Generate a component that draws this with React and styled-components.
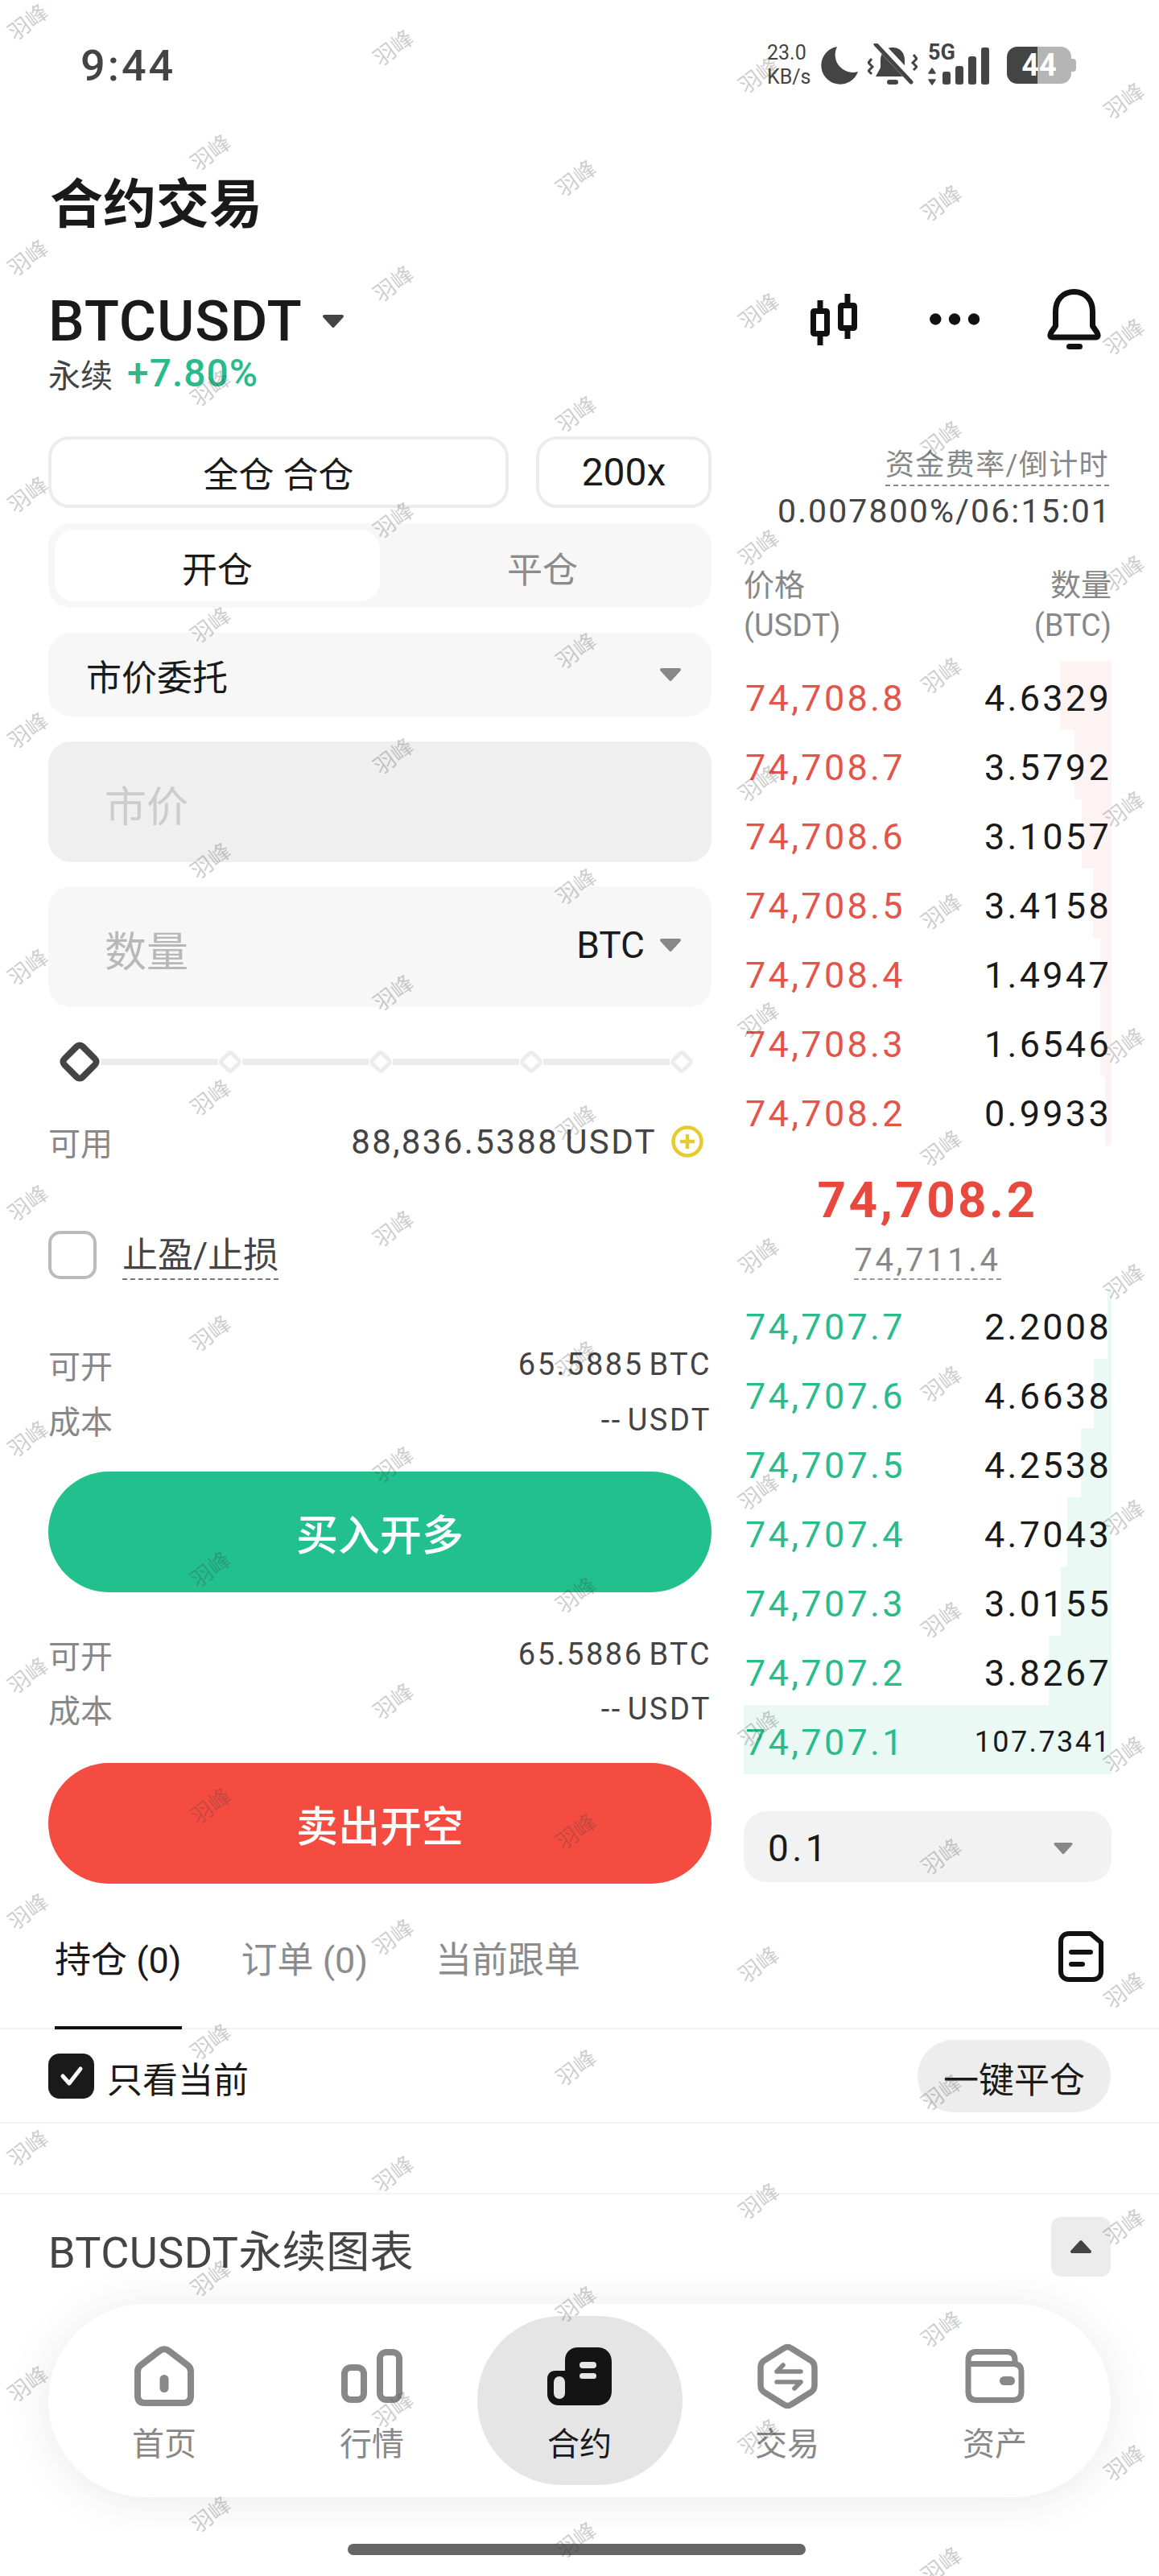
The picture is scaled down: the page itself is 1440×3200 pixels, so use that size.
import React from "react";
import styled, { createGlobalStyle } from "styled-components";

const GlobalStyle = createGlobalStyle`
    html, body {
        margin: 0;
        padding: 0;
        background: #fff;
    }
    * {
        box-sizing: border-box;
    }
`;

const Page = styled.div`
    position: relative;
    width: 1440px;
    height: 3200px;
    overflow: hidden;
    background: #fff;
    color: #1a1a1a;
    font-family: Roboto, "Noto Sans CJK SC", sans-serif;
`;

/* status bar */
const StatusBar = styled.div`
    height: 160px;
    display: flex;
    align-items: center;
    justify-content: space-between;
    padding: 2px 109px 0 100px;
`;
const Clock = styled.div`
    font-size: 54px;
    font-weight: 500;
    letter-spacing: 3px;
    color: #444;
`;
const StatusIcons = styled.div`
    display: flex;
    align-items: center;
`;
const Speed = styled.div`
    width: 66px;
    font-size: 25px;
    line-height: 30px;
    color: #444;
    text-align: left;
`;
const SignalBox = styled.div`
    position: relative;
    width: 78px;
    height: 52px;
    margin: 0 20px 0 13px;
`;
const FiveG = styled.span`
    position: absolute;
    left: 0;
    top: -6px;
    font-size: 27px;
    font-weight: 700;
    color: #444;
`;
const Battery = styled.div`
    position: relative;
    width: 80px;
    height: 46px;
    border-radius: 13px;
    background: linear-gradient(90deg, #444 0, #444 38px, #b5b5b5 38px);
    display: flex;
    align-items: center;
    justify-content: center;
    font-size: 38px;
    font-weight: 700;
    color: #fff;
    &::after {
        content: "";
        position: absolute;
        right: -6px;
        top: 15px;
        width: 6px;
        height: 16px;
        border-radius: 0 4px 4px 0;
        background: #b5b5b5;
    }
`;

/* heading */
const Title = styled.h1`
    margin: 0;
    height: 176px;
    padding-left: 62px;
    display: flex;
    align-items: center;
    font-size: 66px;
    font-weight: 700;
    color: #1a1a1a;
`;
const TickerRow = styled.div`
    height: 109px;
    padding: 16px 72px 0 60px;
    display: flex;
    align-items: center;
    justify-content: space-between;
`;
const Ticker = styled.div`
    display: flex;
    align-items: center;
    gap: 24px;
    font-size: 71px;
    font-weight: 500;
    letter-spacing: 0.8px;
    color: #1a1a1a;
`;
const TickerTools = styled.div`
    display: flex;
    align-items: center;
    gap: 84px;
    margin-top: -4px;
`;
const CandleSlot = styled.div`
    display: flex;
    margin-right: 6px;
`;
const SubRow = styled.div`
    height: 97px;
    padding: 0 0 60px 60px;
    display: flex;
    align-items: center;
    gap: 18px;
    font-size: 40px;
    color: #444;
`;
const Change = styled.span`
    font-size: 48px;
    font-weight: 500;
    letter-spacing: 1px;
    color: #2abb8c;
`;

/* two columns */
const Columns = styled.div`
    display: flex;
    gap: 40px;
    padding-left: 60px;
`;
const OrderForm = styled.div`
    width: 824px;
    display: flex;
    flex-direction: column;
`;
const Book = styled.div`
    width: 457px;
    display: flex;
    flex-direction: column;
`;

const MarginRow = styled.div`
    display: flex;
    gap: 34px;
`;
const OutlineButton = styled.div`
    height: 89px;
    width: ${({ $w }) => $w}px;
    border: 4px solid #ececec;
    border-radius: 26px;
    display: flex;
    align-items: center;
    justify-content: center;
    font-size: ${({ $size }) => $size || 44}px;
    color: #1a1a1a;
`;
const Segmented = styled.div`
    margin-top: 19px;
    height: 105px;
    padding: 8px;
    border-radius: 28px;
    background: #f7f7f7;
    display: flex;
`;
const Segment = styled.div`
    width: 404px;
    padding-top: 4px;
    border-radius: 24px;
    background: ${({ $active }) => ($active ? "#fff" : "transparent")};
    color: ${({ $active }) => ($active ? "#1a1a1a" : "#8c8c8c")};
    display: flex;
    align-items: center;
    justify-content: center;
    font-size: 44px;
`;
const Field = styled.div`
    margin-top: ${({ $mt }) => $mt}px;
    height: ${({ $h }) => $h}px;
    padding: ${({ $pad }) => `0 37px 0 ${$pad}px`};
    border-radius: 28px;
    background: ${({ $bg }) => $bg};
    display: flex;
    align-items: center;
    justify-content: space-between;
    font-size: 44px;
    color: #1a1a1a;
`;
const FieldText = styled.span`
    margin-top: 2px;
    margin-left: -2px;
`;
const Placeholder = styled.span`
    margin-top: 4px;
    margin-left: -2px;
    font-size: 52px;
    color: ${({ $color }) => $color};
`;
const Unit = styled.div`
    display: flex;
    align-items: center;
    gap: 18px;
    margin-top: -4px;
    font-size: 46px;
`;

const Slider = styled.div`
    margin: 41px 0 0 12px;
    height: 54px;
    width: 790px;
    display: flex;
    align-items: center;
`;
const SliderLine = styled.div`
    flex: ${({ $w }) => ($w ? `0 0 ${$w}px` : 1)};
    height: 8px;
    background: #ececec;
`;

const Row = styled.div`
    margin-top: ${({ $mt }) => $mt}px;
    height: ${({ $h }) => $h}px;
    display: flex;
    align-items: center;
    justify-content: space-between;
    font-size: 40px;
    color: #888;
`;
const Amount = styled.span`
    color: #444;
    font-size: ${({ $size }) => $size || 38}px;
    letter-spacing: ${({ $ls }) => $ls || 2.5}px;
    word-spacing: -5px;
`;
const AvailableValue = styled.div`
    display: flex;
    align-items: center;
    gap: 18px;
    padding-right: 10px;
`;
const StopRow = styled.div`
    margin-top: 84px;
    display: flex;
    align-items: center;
    gap: 32px;
`;
const EmptyBox = styled.div`
    width: 60px;
    height: 60px;
    border: 4px solid #bbb;
    border-radius: 15px;
`;
const DashedLabel = styled.span`
    font-size: ${({ $size }) => $size}px;
    color: ${({ $color }) => $color};
    line-height: ${({ $lh }) => $lh}px;
    letter-spacing: ${({ $ls }) => $ls || 0}px;
    margin-top: ${({ $mt }) => $mt || 0}px;
    border-bottom: 2px dashed ${({ $dash }) => $dash || "#777"};
`;
const TradeButton = styled.div`
    margin-top: ${({ $mt }) => $mt}px;
    height: 150px;
    border-radius: 75px;
    background: ${({ $bg }) => $bg};
    color: #fff;
    display: flex;
    align-items: center;
    justify-content: center;
    font-size: 52px;
    font-weight: 500;
`;

/* order book */
const Funding = styled.div`
    height: 132px;
    padding-right: 3px;
    display: flex;
    flex-direction: column;
    align-items: flex-end;
    padding-top: 12px;
`;
const FundingValue = styled.div`
    margin: 6px -3px 0 0;
    font-size: 41px;
    line-height: 50px;
    letter-spacing: 2.1px;
    color: #444;
`;
const BookHead = styled.div`
    height: 150px;
    padding-top: 28px;
    display: flex;
    justify-content: space-between;
    font-size: 38px;
    line-height: 50px;
    color: #888;
`;
const HeadRight = styled.div`
    text-align: right;
`;
const BookRow = styled.div`
    position: relative;
    height: 86px;
    padding: 0 0 0 2px;
    display: flex;
    align-items: center;
    justify-content: space-between;
    font-size: 45px;
    letter-spacing: 3.3px;
`;
const DepthBar = styled.div`
    position: absolute;
    top: -3px;
    right: 0;
    bottom: 3px;
    background: ${({ $bg }) => $bg};
`;
const Price = styled.span`
    position: relative;
    color: ${({ $color }) => $color};
`;
const Size = styled.span`
    position: relative;
    color: #1a1a1a;
    font-size: ${({ $small }) => ($small ? "36px" : "inherit")};
    letter-spacing: ${({ $small }) => ($small ? "2.4px" : "inherit")};
`;
const MidPrice = styled.div`
    height: 179px;
    display: flex;
    flex-direction: column;
    align-items: center;
    padding-top: 29px;
`;
const LastPrice = styled.div`
    font-size: 62px;
    line-height: 72px;
    font-weight: 700;
    letter-spacing: 3.4px;
    color: #e8493f;
`;
const DepthSelect = styled.div`
    margin-top: 43px;
    height: 88px;
    padding: 4px 44px 0 30px;
    border-radius: 28px;
    background: #f2f2f2;
    display: flex;
    align-items: center;
    justify-content: space-between;
    font-size: 46px;
    letter-spacing: 4.4px;
`;

/* positions */
const TabsBar = styled.div`
    height: 181px;
    padding: 0 68px 0 68px;
    border-bottom: 2px solid #f2f2f2;
    display: flex;
    justify-content: space-between;
`;
const Tabs = styled.div`
    display: flex;
`;
const Tab = styled.div`
    margin-right: ${({ $mr }) => $mr || 0}px;
    padding-top: 70px;
    height: 181px;
    font-size: 45px;
    line-height: 52px;
    color: ${({ $active }) => ($active ? "#1a1a1a" : "#8c8c8c")};
    border-bottom: 4px solid ${({ $active }) => ($active ? "#111" : "transparent")};
`;
const NoteSlot = styled.div`
    padding-top: 59px;
    margin-right: 1px;
`;
const FilterRow = styled.div`
    height: 117px;
    padding: 0 60px;
    border-bottom: 2px solid #f2f2f2;
    display: flex;
    align-items: center;
    justify-content: space-between;
`;
const CheckLabel = styled.div`
    display: flex;
    align-items: center;
    gap: 16px;
    font-size: 44px;
    color: #1a1a1a;
`;
const LabelText = styled.span`
    margin-top: 4px;
`;
const CheckedBox = styled.div`
    width: 57px;
    height: 56px;
    border-radius: 14px;
    background: #1a1a1a;
    display: flex;
    align-items: center;
    justify-content: center;
`;
const PillButton = styled.div`
    width: 240px;
    height: 90px;
    padding-top: 5px;
    border-radius: 45px;
    background: #ededed;
    display: flex;
    align-items: center;
    justify-content: center;
    font-size: 44px;
    color: #1a1a1a;
`;
const Spacer = styled.div`
    height: 88px;
    border-bottom: 2px solid #f4f4f4;
`;
const ChartHead = styled.div`
    height: 104px;
    padding: 28px 60px 0 60px;
    display: flex;
    align-items: flex-start;
    justify-content: space-between;
    font-size: 54px;
    letter-spacing: 0.4px;
    color: #444;
`;
const ChartTitle = styled.span`
    margin-top: 17px;
    line-height: 56px;
`;
const CollapseButton = styled.div`
    width: 74px;
    height: 74px;
    border-radius: 12px;
    background: #ececec;
    display: flex;
    align-items: center;
    justify-content: center;
`;

/* bottom nav */
const NavWrap = styled.div`
    height: 310px;
    padding: 32px 60px 38px;
    overflow: hidden;
`;
const Nav = styled.nav`
    height: 240px;
    border-radius: 120px;
    background: #fff;
    box-shadow: 0 4px 60px rgba(0, 0, 0, 0.09);
    display: flex;
    justify-content: center;
    align-items: center;
`;
const NavItem = styled.div`
    width: 258px;
    height: 210px;
    display: flex;
    flex-direction: column;
    align-items: center;
    font-size: 40px;
    color: ${({ $active }) => ($active ? "#1a1a1a" : "#888")};
`;
const NavBubble = styled.div`
    width: 255px;
    height: 210px;
    border-radius: 105px / 105px;
    background: ${({ $active }) => ($active ? "#e5e5e5" : "transparent")};
    display: flex;
    flex-direction: column;
    align-items: center;
`;
const NavIcon = styled.div`
    height: 83px;
    margin-top: 33px;
    display: flex;
    align-items: center;
    justify-content: center;
`;
const NavLabel = styled.span`
    margin-top: 19px;
    line-height: 50px;
`;
const HomeBar = styled.div`
    width: 569px;
    height: 14px;
    margin: 20px 0 0 432px;
    border-radius: 7px;
    background: #666;
`;

/* watermark layer */
const WatermarkLayer = styled.div`
    position: absolute;
    inset: 0;
    pointer-events: none;
`;
const Watermark = styled.span`
    position: absolute;
    font-size: 27px;
    line-height: 32px;
    white-space: nowrap;
    color: rgba(60, 60, 60, 0.27);
    transform: translate(-50%, -50%) rotate(-37deg);
`;

const Caret = ({ w, h, color }) => (
    <svg width={w} height={h} viewBox="0 0 28 18">
        <path d="M3 3 H25 L14 15 Z" fill={color} stroke={color} strokeWidth="4" strokeLinejoin="round" />
    </svg>
);

const Moon = () => (
    <svg width="47" height="47" viewBox="0 0 47 47">
        <path d="M21 0 A23.5 23.5 0 1 0 47 31 A22 22 0 0 1 21 0 Z" fill="#444" />
    </svg>
);

const MutedBell = () => (
    <svg width="62" height="54" viewBox="0 0 62 54" style={{ margin: "0 0 0 12px" }}>
        <path d="M31 5 C21 5 16 12 16 21 V30 L10 41 H52 L46 30 V21 C46 12 41 5 31 5 Z" fill="#444" />
        <rect x="24" y="45" width="14" height="6" rx="3" fill="#444" />
        <path d="M5 19 L1 24 L6 29 L1 34 L5 38 M57 14 L61 19 L56 24 L61 29 L57 33" fill="none" stroke="#444" strokeWidth="3" />
        <path d="M11 -2 L57 47" stroke="#fff" strokeWidth="11" />
        <path d="M10 1 L54 48" stroke="#444" strokeWidth="5" strokeLinecap="round" />
    </svg>
);

const SignalBars = () => (
    <svg width="78" height="52" viewBox="0 0 78 52" style={{ display: "block" }}>
        <path d="M5 30 L9 36 H1 Z M5 50 L9 44 H1 Z" fill="#444" stroke="#444" strokeWidth="1.5" strokeLinejoin="round" />
        <rect x="18" y="34" width="10" height="16" rx="3" fill="#444" />
        <rect x="34" y="27" width="10" height="23" rx="3" fill="#444" />
        <rect x="50" y="15" width="10" height="35" rx="3" fill="#444" />
        <rect x="66" y="4" width="10" height="46" rx="3" fill="#444" />
    </svg>
);

const CandleIcon = () => (
    <svg width="58" height="64" viewBox="0 0 58 64" style={{ display: "block" }}>
        <path d="M12 8 V21 M12 50 V64 M46 0 V14 M46 43 V56" stroke="#111" strokeWidth="7" />
        <rect x="3.5" y="21.5" width="17" height="28" rx="1" fill="none" stroke="#111" strokeWidth="7" />
        <rect x="37.5" y="14.5" width="17" height="28" rx="1" fill="none" stroke="#111" strokeWidth="7" />
    </svg>
);

const Dots = () => (
    <svg width="62" height="15" viewBox="0 0 62 15">
        <circle cx="7.3" cy="7.5" r="7.2" fill="#111" />
        <circle cx="31" cy="7.5" r="7.2" fill="#111" />
        <circle cx="55" cy="7.5" r="7.2" fill="#111" />
    </svg>
);

const BellIcon = () => (
    <svg width="67" height="75" viewBox="0 0 67 75">
        <path
            d="M10.5 28 C10.5 13 20 3.5 33.5 3.5 C47 3.5 56.5 13 56.5 28 V46 L62 54 Q65 60 60 60 H7 Q2 60 5 54 L10.5 46 Z"
            fill="none"
            stroke="#111"
            strokeWidth="7"
            strokeLinejoin="round"
        />
        <rect x="24" y="68" width="20" height="7" rx="3.5" fill="#111" />
    </svg>
);

const Diamond = ({ size, stroke, width }) => (
    <svg width={size} height={size} viewBox="0 0 54 54" style={{ flex: "none", overflow: "visible" }}>
        <rect x="11" y="11" width="32" height="32" rx="5" transform="rotate(45 27 27)" fill="#fff" stroke={stroke} strokeWidth={width} />
    </svg>
);

const PlusCircle = () => (
    <svg width="40" height="42" viewBox="0 0 40 42">
        <circle cx="20" cy="21" r="17.5" fill="none" stroke="#e6cb30" strokeWidth="4.5" />
        <path d="M20 12 V30 M11 21 H29" stroke="#e6cb30" strokeWidth="4.5" />
    </svg>
);

const NoteIcon = () => (
    <svg width="56" height="63" viewBox="0 0 56 63" style={{ display: "block" }}>
        <path d="M13 3 H40 L53 14 V50 C53 56 49 60 43 60 H13 C7 60 3 56 3 50 V13 C3 7 7 3 13 3 Z" fill="none" stroke="#111" strokeWidth="6" strokeLinejoin="round" />
        <path d="M16 26 H40 M16 41 H30" stroke="#111" strokeWidth="6" strokeLinecap="round" />
    </svg>
);

const Tick = () => (
    <svg width="30" height="26" viewBox="0 0 30 26">
        <path d="M4 13 L12 22 L26 4" fill="none" stroke="#fff" strokeWidth="5" strokeLinecap="round" strokeLinejoin="round" />
    </svg>
);

const HomeIcon = () => (
    <svg width="74" height="75" viewBox="0 0 74 75">
        <path
            d="M31 6.5 Q37 2 43 6.5 L66 24 Q70 27 70 32 V62 Q70 71 61 71 H13 Q4 71 4 62 V32 Q4 27 8 24 Z"
            fill="none"
            stroke="#888"
            strokeWidth="8"
            strokeLinejoin="round"
        />
        <rect x="31.5" y="36" width="11" height="22" rx="5.5" fill="#888" />
    </svg>
);

const MarketIcon = () => (
    <svg width="76" height="67" viewBox="0 0 76 67">
        <rect x="4" y="23" width="24" height="40" rx="8" fill="none" stroke="#888" strokeWidth="8" />
        <rect x="48" y="4" width="24" height="59" rx="8" fill="none" stroke="#888" strokeWidth="8" />
    </svg>
);

const ContractIcon = () => (
    <svg width="80" height="72" viewBox="0 0 80 72">
        <path
            d="M22 16 C22 6 29 0 38 0 H62 C73 0 80 7 80 18 V54 C80 65 73 72 62 72 H14 C6 72 0 66 0 58 V39 C0 33 4 29 10 29 H22 Z"
            fill="#141414"
        />
        <rect x="40" y="18" width="21" height="8" rx="4" fill="#e5e5e5" />
        <rect x="40" y="32" width="21" height="7" rx="3.5" fill="#e5e5e5" />
        <rect x="8" y="36" width="14" height="28" rx="7" fill="#e5e5e5" />
    </svg>
);

const TradeIcon = () => (
    <svg width="75" height="82" viewBox="0 0 75 82">
        <path
            d="M33 6 Q37.5 3 42 6 L66 21 Q71 24 71 30 V52 Q71 58 66 61 L42 76 Q37.5 79 33 76 L9 61 Q4 58 4 52 V30 Q4 24 9 21 Z"
            fill="none"
            stroke="#888"
            strokeWidth="7.5"
            strokeLinejoin="round"
        />
        <path d="M24 35 H54 M32 27 L24 35 M24 48 H54 M46 56 L54 48" fill="none" stroke="#888" strokeWidth="5.5" strokeLinecap="round" />
    </svg>
);

const WalletIcon = () => (
    <svg width="74" height="67" viewBox="0 0 74 67">
        <path
            d="M4 18.5 H60 Q70 18.5 70 28 V53 Q70 63.5 60 63.5 H14 Q4 63.5 4 53 V14 Q4 3.5 14 3.5 H52 Q62 3.5 62 14 V19"
            fill="none"
            stroke="#888"
            strokeWidth="7"
        />
        <rect x="43" y="34" width="19" height="11" rx="5.5" fill="#888" />
    </svg>
);

const asks = [
    ["74,708.8", "4.6329", 64],
    ["74,708.7", "3.5792", 46],
    ["74,708.6", "3.1057", 37],
    ["74,708.5", "3.4158", 23],
    ["74,708.4", "1.4947", 14],
    ["74,708.3", "1.6546", 14],
    ["74,708.2", "0.9933", 8],
];
const bids = [
    ["74,707.7", "2.2008", 5],
    ["74,707.6", "4.6638", 22],
    ["74,707.5", "4.2538", 38],
    ["74,707.4", "4.7043", 55],
    ["74,707.3", "3.0155", 63],
    ["74,707.2", "3.8267", 78],
];

const navItems = [
    ["首页", <HomeIcon key="h" />],
    ["行情", <MarketIcon key="m" />],
    ["合约", <ContractIcon key="c" />, true],
    ["交易", <TradeIcon key="t" />],
    ["资产", <WalletIcon key="w" />],
];

// tiled watermark, staggered columns repeating every 293px
const marks = [];
const colStart = [28, 190, 60, 222, 94, 253, 126];
colStart.forEach((start, col) => {
    for (let k = 0; k < 11; k++) {
        marks.push({ x: 35 + col * 227, y: start + k * 293.4 });
    }
});

export default function App() {
    return (
        <Page>
            <GlobalStyle />
            <StatusBar>
                <Clock>9:44</Clock>
                <StatusIcons>
                    <Speed>
                        23.0
                        <br />
                        KB/s
                    </Speed>
                    <Moon />
                    <MutedBell />
                    <SignalBox>
                        <SignalBars />
                        <FiveG>5G</FiveG>
                    </SignalBox>
                    <Battery>44</Battery>
                </StatusIcons>
            </StatusBar>

            <Title>合约交易</Title>
            <TickerRow>
                <Ticker>
                    BTCUSDT
                    <Caret w={28} h={18} color="#444" />
                </Ticker>
                <TickerTools>
                    <CandleSlot>
                        <CandleIcon />
                    </CandleSlot>
                    <Dots />
                    <BellIcon />
                </TickerTools>
            </TickerRow>
            <SubRow>
                永续
                <Change>+7.80%</Change>
            </SubRow>

            <Columns>
                <OrderForm>
                    <MarginRow>
                        <OutlineButton $w={572}>全仓 合仓</OutlineButton>
                        <OutlineButton $w={218} $size={48}>
                            200x
                        </OutlineButton>
                    </MarginRow>
                    <Segmented>
                        <Segment $active>开仓</Segment>
                        <Segment>平仓</Segment>
                    </Segmented>
                    <Field $mt={31} $h={104} $bg="#f7f7f7" $pad={49}>
                        <FieldText>市价委托</FieldText>
                        <Caret w={28} h={18} color="#888" />
                    </Field>
                    <Field $mt={31} $h={150} $bg="#efefef" $pad={72}>
                        <Placeholder $color="#ccc">市价</Placeholder>
                    </Field>
                    <Field $mt={30} $h={150} $bg="#f7f7f7" $pad={72}>
                        <Placeholder $color="#b8b8b8">数量</Placeholder>
                        <Unit>
                            BTC
                            <Caret w={28} h={18} color="#888" />
                        </Unit>
                    </Field>
                    <Slider>
                        <Diamond size={54} stroke="#444" width={8} />
                        <SliderLine $w={145} />
                        <Diamond size={30} stroke="#ececec" width={9} />
                        <SliderLine />
                        <Diamond size={30} stroke="#ececec" width={9} />
                        <SliderLine />
                        <Diamond size={30} stroke="#ececec" width={9} />
                        <SliderLine />
                        <Diamond size={30} stroke="#ececec" width={9} />
                    </Slider>
                    <Row $mt={47} $h={50}>
                        可用
                        <AvailableValue>
                            <Amount $size={42} $ls={2.4}>
                                88,836.5388 USDT
                            </Amount>
                            <PlusCircle />
                        </AvailableValue>
                    </Row>
                    <StopRow>
                        <EmptyBox />
                        <DashedLabel $size={44} $lh={56} $mt={5} $color="#444">
                            止盈/止损
                        </DashedLabel>
                    </StopRow>
                    <Row $mt={85} $h={40}>
                        可开
                        <Amount>65.5885 BTC</Amount>
                    </Row>
                    <Row $mt={29} $h={40}>
                        成本
                        <Amount>-- USDT</Amount>
                    </Row>
                    <TradeButton $mt={44} $bg="#22c08c">
                        买入开多
                    </TradeButton>
                    <Row $mt={57} $h={40}>
                        可开
                        <Amount>65.5886 BTC</Amount>
                    </Row>
                    <Row $mt={28} $h={40}>
                        成本
                        <Amount>-- USDT</Amount>
                    </Row>
                    <TradeButton $mt={47} $bg="#f44c41">
                        卖出开空
                    </TradeButton>
                </OrderForm>

                <Book>
                    <Funding>
                        <DashedLabel $size={36} $lh={48} $ls={1.4} $color="#888" $dash="#888">
                            资金费率/倒计时
                        </DashedLabel>
                        <FundingValue>0.007800%/06:15:01</FundingValue>
                    </Funding>
                    <BookHead>
                        <div>
                            价格
                            <br />
                            (USDT)
                        </div>
                        <HeadRight>
                            数量
                            <br />
                            (BTC)
                        </HeadRight>
                    </BookHead>
                    {asks.map(([price, size, depth]) => (
                        <BookRow key={price}>
                            <DepthBar $bg="#fdf3f3" style={{ width: depth }} />
                            <Price $color="#e3544b">{price}</Price>
                            <Size>{size}</Size>
                        </BookRow>
                    ))}
                    <MidPrice>
                        <LastPrice>74,708.2</LastPrice>
                        <DashedLabel $size={40} $lh={45} $ls={3.6} $mt={16} $color="#888" $dash="#999">
                            74,711.4
                        </DashedLabel>
                    </MidPrice>
                    {bids.map(([price, size, depth]) => (
                        <BookRow key={price}>
                            <DepthBar $bg="#ebf9f4" style={{ width: depth }} />
                            <Price $color="#2abb8c">{price}</Price>
                            <Size>{size}</Size>
                        </BookRow>
                    ))}
                    <BookRow>
                        <DepthBar $bg="#ebf9f4" style={{ width: 457 }} />
                        <Price $color="#2abb8c">74,707.1</Price>
                        <Size $small>107.7341</Size>
                    </BookRow>
                    <DepthSelect>
                        0.1
                        <Caret w={32} h={16} color="#888" />
                    </DepthSelect>
                </Book>
            </Columns>

            <TabsBar>
                <Tabs>
                    <Tab $active $mr={74}>
                        持仓 (0)
                    </Tab>
                    <Tab $mr={84}>订单 (0)</Tab>
                    <Tab>当前跟单</Tab>
                </Tabs>
                <NoteSlot>
                    <NoteIcon />
                </NoteSlot>
            </TabsBar>
            <FilterRow>
                <CheckLabel>
                    <CheckedBox>
                        <Tick />
                    </CheckedBox>
                    <LabelText>只看当前</LabelText>
                </CheckLabel>
                <PillButton>一键平仓</PillButton>
            </FilterRow>
            <Spacer />
            <ChartHead>
                <ChartTitle>BTCUSDT永续图表</ChartTitle>
                <CollapseButton>
                    <svg width="28" height="18" viewBox="0 0 28 18">
                        <path d="M3 15 H25 L14 3 Z" fill="#444" stroke="#444" strokeWidth="4" strokeLinejoin="round" />
                    </svg>
                </CollapseButton>
            </ChartHead>

            <NavWrap>
                <Nav>
                    {navItems.map(([label, icon, active]) => (
                        <NavItem key={label} $active={active}>
                            <NavBubble $active={active}>
                                <NavIcon>{icon}</NavIcon>
                                <NavLabel>{label}</NavLabel>
                            </NavBubble>
                        </NavItem>
                    ))}
                </Nav>
            </NavWrap>
            <HomeBar />

            <WatermarkLayer>
                {marks.map((m) => (
                    <Watermark key={`${m.x}-${m.y}`} style={{ left: m.x, top: m.y }}>
                        羽峰
                    </Watermark>
                ))}
            </WatermarkLayer>
        </Page>
    );
}
